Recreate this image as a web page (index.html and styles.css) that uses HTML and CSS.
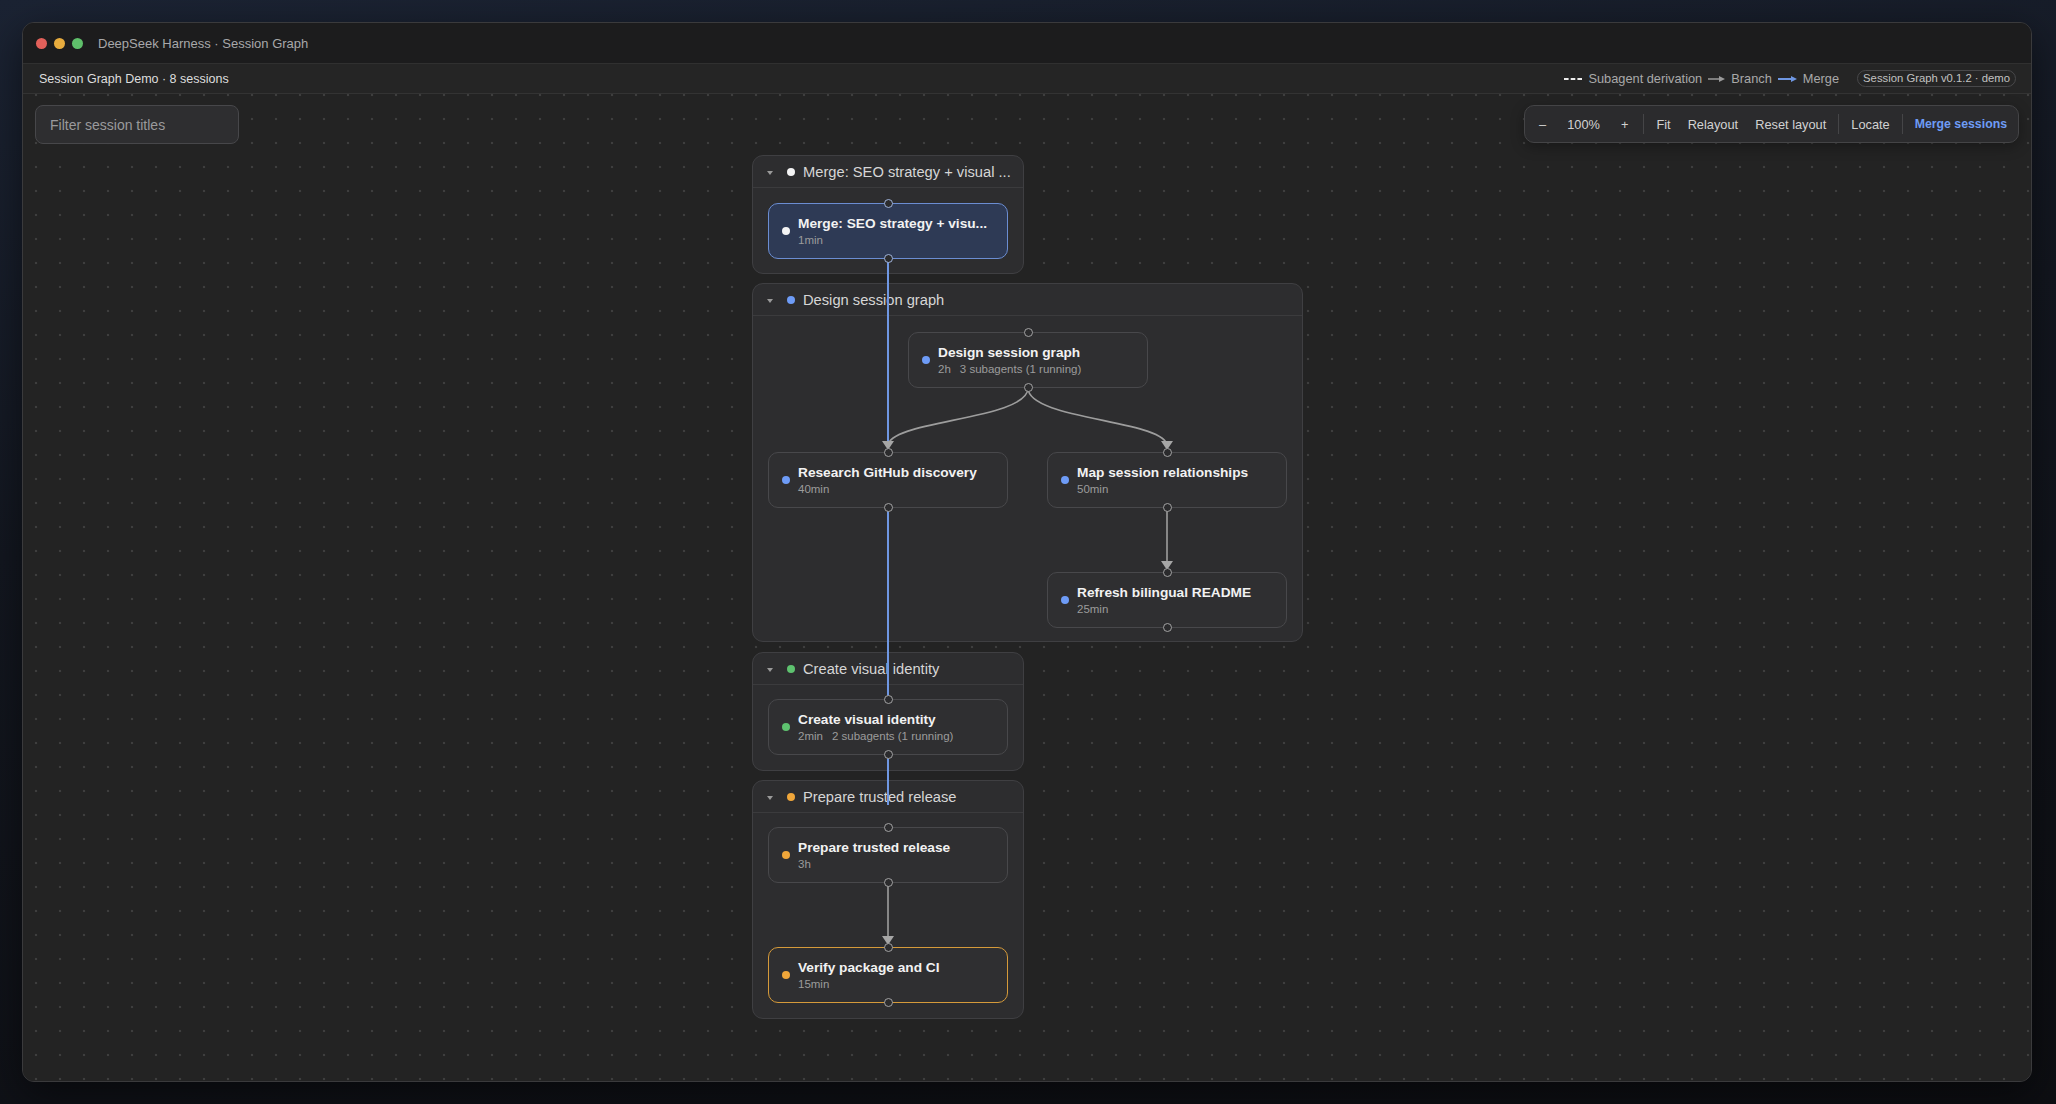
FILE: index.html
```html
<!DOCTYPE html>
<html lang="en">
<head>
    <meta charset="UTF-8">
    <meta name="viewport" content="width=device-width, initial-scale=1.0">
    <title>DeepSeek Harness · Session Graph</title>
    <link rel="stylesheet" href="styles.css">
</head>
<body>
    <div class="window">
        <!-- window chrome -->
        <div class="titlebar">
            <div class="lights">
                <span class="light red"></span>
                <span class="light yellow"></span>
                <span class="light green"></span>
            </div>
            <div class="window-title">DeepSeek Harness · Session Graph</div>
        </div>

        <!-- header with legend -->
        <div class="subbar">
            <div class="subbar-title">Session Graph Demo · 8 sessions</div>
            <div class="legend">
                <span class="legend-item">
                    <svg width="18" height="10" viewBox="0 0 18 10"><line x1="0" y1="5" x2="18" y2="5" stroke="#ececec" stroke-width="2" stroke-dasharray="4.6 2.1"/></svg>
                    Subagent derivation
                </span>
                <span class="legend-item">
                    <svg width="17" height="10" viewBox="0 0 17 10"><line x1="0" y1="5" x2="12" y2="5" stroke="#9a9a9a" stroke-width="1.5"/><polygon points="11,2 17,5 11,8" fill="#9a9a9a"/></svg>
                    Branch
                </span>
                <span class="legend-item">
                    <svg width="19" height="10" viewBox="0 0 19 10"><line x1="0" y1="5" x2="14" y2="5" stroke="#6f97e2" stroke-width="2"/><polygon points="13,2 19,5 13,8" fill="#6f97e2"/></svg>
                    Merge
                </span>
                <span class="version">Session Graph v0.1.2 · demo</span>
            </div>
        </div>

        <!-- graph canvas -->
        <div class="canvas">
            <div class="layer" id="groupLayer"></div>
            <svg class="edges" id="edgeLayer"></svg>
            <div class="layer" id="nodeLayer"></div>

            <div class="controls">
                <input class="filter" type="text" placeholder="Filter session titles">
                <div class="toolbar">
                    <button class="tool tool-sign">–</button>
                    <span class="tool zoom-level">100%</span>
                    <button class="tool tool-sign">+</button>
                    <span class="tool-sep"></span>
                    <button class="tool">Fit</button>
                    <button class="tool">Relayout</button>
                    <button class="tool">Reset layout</button>
                    <span class="tool-sep"></span>
                    <button class="tool">Locate</button>
                    <span class="tool-sep"></span>
                    <button class="tool tool-primary">Merge sessions</button>
                </div>
            </div>
        </div>
    </div>

    <script>
        // layout in canvas coordinates
        const NODE_W = 240;
        const NODE_H = 56;

        const groups = [
            { x: 729, y: 61,  w: 272, h: 119, title: 'Merge: SEO strategy + visual ...', color: 'white' },
            { x: 729, y: 189, w: 551, h: 359, title: 'Design session graph', color: 'blue' },
            { x: 729, y: 558, w: 272, h: 119, title: 'Create visual identity', color: 'green' },
            { x: 729, y: 686, w: 272, h: 239, title: 'Prepare trusted release', color: 'orange' }
        ];

        const sessions = [
            { id: 'merge',    x: 745,  y: 109, title: 'Merge: SEO strategy + visu...', meta: ['1min'], color: 'white', kind: 'merged' },
            { id: 'design',   x: 885,  y: 238, title: 'Design session graph', meta: ['2h', '3 subagents (1 running)'], color: 'blue' },
            { id: 'research', x: 745,  y: 358, title: 'Research GitHub discovery', meta: ['40min'], color: 'blue' },
            { id: 'map',      x: 1024, y: 358, title: 'Map session relationships', meta: ['50min'], color: 'blue' },
            { id: 'refresh',  x: 1024, y: 478, title: 'Refresh bilingual README', meta: ['25min'], color: 'blue' },
            { id: 'create',   x: 745,  y: 605, title: 'Create visual identity', meta: ['2min', '2 subagents (1 running)'], color: 'green' },
            { id: 'prepare',  x: 745,  y: 733, title: 'Prepare trusted release', meta: ['3h'], color: 'orange' },
            { id: 'verify',   x: 745,  y: 853, title: 'Verify package and CI', meta: ['15min'], color: 'orange', kind: 'active' }
        ];

        const edges = [
            { from: 'merge', to: 'research', type: 'merge' },
            { from: 'research', to: 'create', type: 'merge' },
            { from: 'create', to: 'prepare', type: 'merge', stopAt: 711 },
            { from: 'design', to: 'research', type: 'branch' },
            { from: 'design', to: 'map', type: 'branch' },
            { from: 'map', to: 'refresh', type: 'branch' },
            { from: 'prepare', to: 'verify', type: 'branch' }
        ];

        const byId = {};
        sessions.forEach(s => byId[s.id] = s);

        // groups
        const groupLayer = document.getElementById('groupLayer');
        groups.forEach(g => {
            const el = document.createElement('div');
            el.className = 'group';
            el.style.left = g.x + 'px';
            el.style.top = g.y + 'px';
            el.style.width = g.w + 'px';
            el.style.height = g.h + 'px';
            el.innerHTML = `
                <div class="group-header">
                    <span class="caret"></span>
                    <span class="dot dot-${g.color}"></span>
                    <span class="group-title">${g.title}</span>
                </div>`;
            groupLayer.appendChild(el);
        });

        // edges
        const svg = document.getElementById('edgeLayer');
        let markup = '';
        edges.forEach(e => {
            const a = byId[e.from];
            const b = byId[e.to];
            const sx = a.x + NODE_W / 2, sy = a.y + NODE_H;
            const tx = b.x + NODE_W / 2, ty = e.stopAt || b.y;
            if (e.type === 'merge') {
                markup += `<line x1="${sx}" y1="${sy}" x2="${tx}" y2="${ty}" class="edge-merge"/>`;
                return;
            }
            const mid = (ty - sy) / 2;
            markup += `<path d="M${sx},${sy} C${sx},${sy + mid} ${tx},${ty - mid} ${tx},${ty - 6}" class="edge-branch"/>`;
            markup += `<polygon points="${tx - 6},${ty - 11} ${tx + 6},${ty - 11} ${tx},${ty - 2}" class="edge-arrow"/>`;
        });
        svg.innerHTML = markup;

        // session nodes
        const nodeLayer = document.getElementById('nodeLayer');
        sessions.forEach(s => {
            const el = document.createElement('div');
            el.className = 'node' + (s.kind ? ' node-' + s.kind : '');
            el.style.left = s.x + 'px';
            el.style.top = s.y + 'px';
            el.innerHTML = `
                <span class="handle handle-top"></span>
                <span class="dot dot-${s.color}"></span>
                <div class="node-text">
                    <div class="node-title">${s.title}</div>
                    <div class="node-meta">${s.meta.map(m => `<span>${m}</span>`).join('')}</div>
                </div>
                <span class="handle handle-bottom"></span>`;
            nodeLayer.appendChild(el);
        });
    </script>
</body>
</html>
```

FILE: styles.css
```css
* {
    box-sizing: border-box;
}
html, body {
    margin: 0;
}
body {
    height: 1104px;
    padding: 22px 24px 22px 22px;
    overflow: hidden;
    font-family: "Liberation Sans", Arial, sans-serif;
    background: linear-gradient(172deg, #1b2333 0%, #131720 40%, #0d0e12 100%);
}
.window {
    height: 100%;
    display: flex;
    flex-direction: column;
    border: 1px solid #3a3a3c;
    border-radius: 12px;
    overflow: hidden;
    background: #232323;
    box-shadow: 0 12px 40px rgba(0, 0, 0, 0.5);
}

/* title bar */
.titlebar {
    flex: none;
    height: 40px;
    display: flex;
    align-items: center;
    padding-left: 13px;
    background: #1c1c1d;
}
.lights {
    display: flex;
    gap: 7px;
}
.light {
    width: 11px;
    height: 11px;
    border-radius: 50%;
}
.red { background: #e2605a; }
.yellow { background: #e8ac3e; }
.green { background: #5fc06b; }
.window-title {
    margin-left: 15px;
    font-size: 13px;
    color: #a8a8aa;
}

/* sub header */
.subbar {
    flex: none;
    height: 31px;
    display: flex;
    align-items: center;
    justify-content: space-between;
    padding: 0 15px 0 16px;
    background: #252525;
    border-top: 1px solid #303030;
    border-bottom: 1px solid #333;
}
.subbar-title {
    font-size: 12.5px;
    color: #dedede;
}
.legend {
    display: flex;
    align-items: center;
    font-size: 12.8px;
    color: #a9a9a9;
}
.legend-item {
    display: flex;
    align-items: center;
    gap: 6px;
    margin-right: 6px;
}
.version {
    margin-left: 12px;
    height: 17px;
    padding: 0 5px;
    border: 1px solid #48484a;
    border-radius: 9px;
    font-size: 11.3px;
    line-height: 15px;
    color: #c2c2c2;
}

/* canvas */
.canvas {
    flex: 1;
    position: relative;
    overflow: hidden;
    background-color: #232323;
    background-image: radial-gradient(circle, #3e3e3e 1.1px, transparent 1.6px);
    background-size: 24px 24px;
    background-position: 1px 13px;
}
.layer {
    position: absolute;
    inset: 0;
}
.edges {
    position: absolute;
    inset: 0;
    width: 100%;
    height: 100%;
    overflow: visible;
}
.edge-merge {
    stroke: #6f97e2;
    stroke-width: 2;
}
.edge-branch {
    fill: none;
    stroke: #9d9d9d;
    stroke-width: 1.6;
}
.edge-arrow {
    fill: #a6a6a6;
}

/* overlay controls */
.controls {
    position: absolute;
    top: 11px;
    left: 12px;
    right: 12px;
    display: flex;
    justify-content: space-between;
    align-items: flex-start;
}
.filter {
    width: 204px;
    height: 39px;
    padding: 0 14px;
    border: 1px solid #47474a;
    border-radius: 8px;
    background: #2e2e30;
    font-family: inherit;
    font-size: 14px;
    color: #ddd;
}
.filter::placeholder {
    color: #9a9a9c;
}
.toolbar {
    height: 38px;
    display: flex;
    align-items: center;
    gap: 1px;
    padding: 0 3px;
    border: 1px solid #444446;
    border-radius: 10px;
    background: #2b2b2d;
    box-shadow: 0 4px 14px rgba(0, 0, 0, 0.3);
}
.tool {
    padding: 0 8px;
    border: none;
    background: none;
    font-family: inherit;
    font-size: 12.8px;
    color: #d2d2d2;
    cursor: pointer;
}
.tool-sign {
    padding: 0 11px;
}
.zoom-level {
    padding: 0 9px;
}
.tool-primary {
    font-weight: bold;
    font-size: 12.3px;
    color: #6e9cf5;
}
.tool-sep {
    width: 1px;
    height: 20px;
    margin: 0 3px;
    background: #454547;
}

/* groups */
.group {
    position: absolute;
    border: 1px solid #3f3f42;
    border-radius: 11px;
    background: #2d2d2f;
}
.group-header {
    height: 32px;
    display: flex;
    align-items: center;
    padding: 0 4px 0 14px;
    border-bottom: 1px solid #3b3b3d;
}
.caret {
    width: 0;
    height: 0;
    margin-top: 3px;
    margin-right: 14px;
    border-left: 3px solid transparent;
    border-right: 3px solid transparent;
    border-top: 4px solid #9a9a9a;
}
.group-title {
    margin-left: 8px;
    font-size: 14.7px;
    color: #d6d6d6;
    white-space: nowrap;
}

/* session nodes */
.node {
    position: absolute;
    width: 240px;
    height: 56px;
    display: flex;
    align-items: center;
    gap: 8px;
    padding-left: 13px;
    border: 1px solid #48484b;
    border-radius: 10px;
    background: #2f2f31;
}
.node-merged {
    background: #2e3a55;
    border-color: #6b8dd2;
}
.node-active {
    border: 1.5px solid #d59a3a;
}
.node-title {
    font-size: 13.7px;
    line-height: 18px;
    font-weight: bold;
    color: #f2f2f2;
    white-space: nowrap;
}
.node-meta {
    display: flex;
    gap: 9px;
    font-size: 11.5px;
    line-height: 14px;
    color: #9c9c9c;
}
.dot {
    flex: none;
    width: 8px;
    height: 8px;
    border-radius: 50%;
}
.dot-white { background: #f4f4f4; }
.dot-blue { background: #6e9cf7; }
.dot-green { background: #5ec26f; }
.dot-orange { background: #efa63a; }
.handle {
    position: absolute;
    left: 50%;
    width: 9px;
    height: 9px;
    margin-left: -4.5px;
    border: 1.5px solid #a3a3a3;
    border-radius: 50%;
    background: #2b2b2d;
}
.handle-top {
    top: -5px;
}
.handle-bottom {
    bottom: -5px;
}
.node-merged .handle {
    border-color: #9fb3da;
}
```
